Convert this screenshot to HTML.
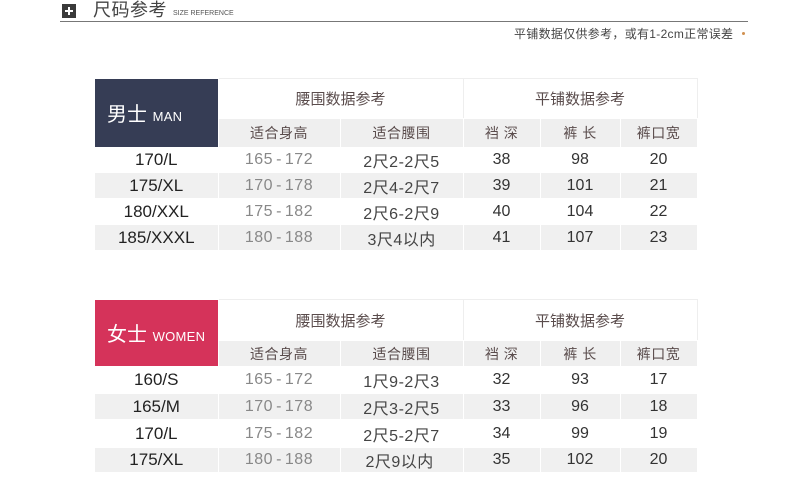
<!DOCTYPE html>
<html><head><meta charset="utf-8"><style>
*{margin:0;padding:0;box-sizing:border-box}
body{width:790px;height:479px;background:#fff;position:relative;overflow:hidden;font-family:"Liberation Sans","Noto Sans CJK SC",sans-serif}
.abs{position:absolute}
table{position:absolute;left:95px;border-collapse:collapse;table-layout:fixed;width:602px}
td{text-align:center;padding:0;font-size:16px;color:#333;border-right:1px solid #fff;border-bottom:1px solid #fff;white-space:nowrap}
td.h{color:#5a4c4c;font-size:15px;background:#fff;border-top:1px solid #eee;border-right:1px solid #eee}
tr.sub td{background:#efefef;color:#5a4c4c;font-size:14px;letter-spacing:0.5px}
tr.g td{background:#f0f0f0}
td.c1{color:#222;font-size:17px}
td.c2{color:#888;letter-spacing:0.5px}
td.c2 i{font-style:normal;margin:0 3px}
td.c3{color:#444;letter-spacing:0.5px}
td.lab{color:#fff;font-size:20px;text-align:left;padding-left:12px}
td.lab span{font-size:13px;letter-spacing:0.3px}
</style></head><body>
<div class="abs" style="left:62px;top:4px;width:14px;height:14px;background:#3a3a3a"></div>
<div class="abs" style="left:65px;top:10px;width:8px;height:2px;background:#fff"></div>
<div class="abs" style="left:68px;top:7px;width:2px;height:8px;background:#fff"></div>
<div class="abs" style="left:93px;top:-1px;font-size:18px;color:#444;line-height:22px;letter-spacing:0.5px">尺码参考</div>
<div class="abs" style="left:173px;top:10px;font-size:7px;color:#555">SIZE REFERENCE</div>
<div class="abs" style="left:60px;top:21px;width:688px;height:1px;background:#777"></div>
<div class="abs" style="left:514px;top:25px;font-size:12px;color:#444;letter-spacing:0.3px">平铺数据仅供参考，或有1-2cm正常误差</div>
<div class="abs" style="left:742px;top:32px;width:3px;height:3px;border-radius:50%;background:#d09050"></div>

<table style="top:78px">
<colgroup><col style="width:123px"><col style="width:122px"><col style="width:123px"><col style="width:77px"><col style="width:80px"><col style="width:77px"></colgroup>
<tr style="height:40px"><td rowspan="2" class="lab" style="background:#363d55">男士 <span>MAN</span></td><td colspan="2" class="h">腰围数据参考</td><td colspan="3" class="h">平铺数据参考</td></tr>
<tr class="sub" style="height:29px"><td>适合身高</td><td>适合腰围</td><td>裆 深</td><td>裤 长</td><td>裤口宽</td></tr>
<tr style="height:25px"><td class="c1">170/L</td><td class="c2">165<i>-</i>172</td><td class="c3">2尺2-2尺5</td><td>38</td><td>98</td><td>20</td></tr>
<tr class="g" style="height:26px"><td class="c1">175/XL</td><td class="c2">170<i>-</i>178</td><td class="c3">2尺4-2尺7</td><td>39</td><td>101</td><td>21</td></tr>
<tr style="height:26px"><td class="c1">180/XXL</td><td class="c2">175<i>-</i>182</td><td class="c3">2尺6-2尺9</td><td>40</td><td>104</td><td>22</td></tr>
<tr class="g" style="height:26px"><td class="c1">185/XXXL</td><td class="c2">180<i>-</i>188</td><td class="c3" style="text-align:left;padding-left:27px">3尺4以内</td><td>41</td><td>107</td><td>23</td></tr>
</table>

<table style="top:299px">
<colgroup><col style="width:123px"><col style="width:122px"><col style="width:123px"><col style="width:77px"><col style="width:80px"><col style="width:77px"></colgroup>
<tr style="height:41px"><td rowspan="2" class="lab" style="background:#d5335a">女士 <span>WOMEN</span></td><td colspan="2" class="h">腰围数据参考</td><td colspan="3" class="h">平铺数据参考</td></tr>
<tr class="sub" style="height:26px"><td>适合身高</td><td>适合腰围</td><td>裆 深</td><td>裤 长</td><td>裤口宽</td></tr>
<tr style="height:27px"><td class="c1">160/S</td><td class="c2">165<i>-</i>172</td><td class="c3">1尺9-2尺3</td><td>32</td><td>93</td><td>17</td></tr>
<tr class="g" style="height:26px"><td class="c1">165/M</td><td class="c2">170<i>-</i>178</td><td class="c3">2尺3-2尺5</td><td>33</td><td>96</td><td>18</td></tr>
<tr style="height:28px"><td class="c1">170/L</td><td class="c2">175<i>-</i>182</td><td class="c3">2尺5-2尺7</td><td>34</td><td>99</td><td>19</td></tr>
<tr class="g" style="height:24px"><td class="c1">175/XL</td><td class="c2">180<i>-</i>188</td><td class="c3" style="text-align:left;padding-left:25px">2尺9以内</td><td>35</td><td>102</td><td>20</td></tr>
</table>
</body></html>
